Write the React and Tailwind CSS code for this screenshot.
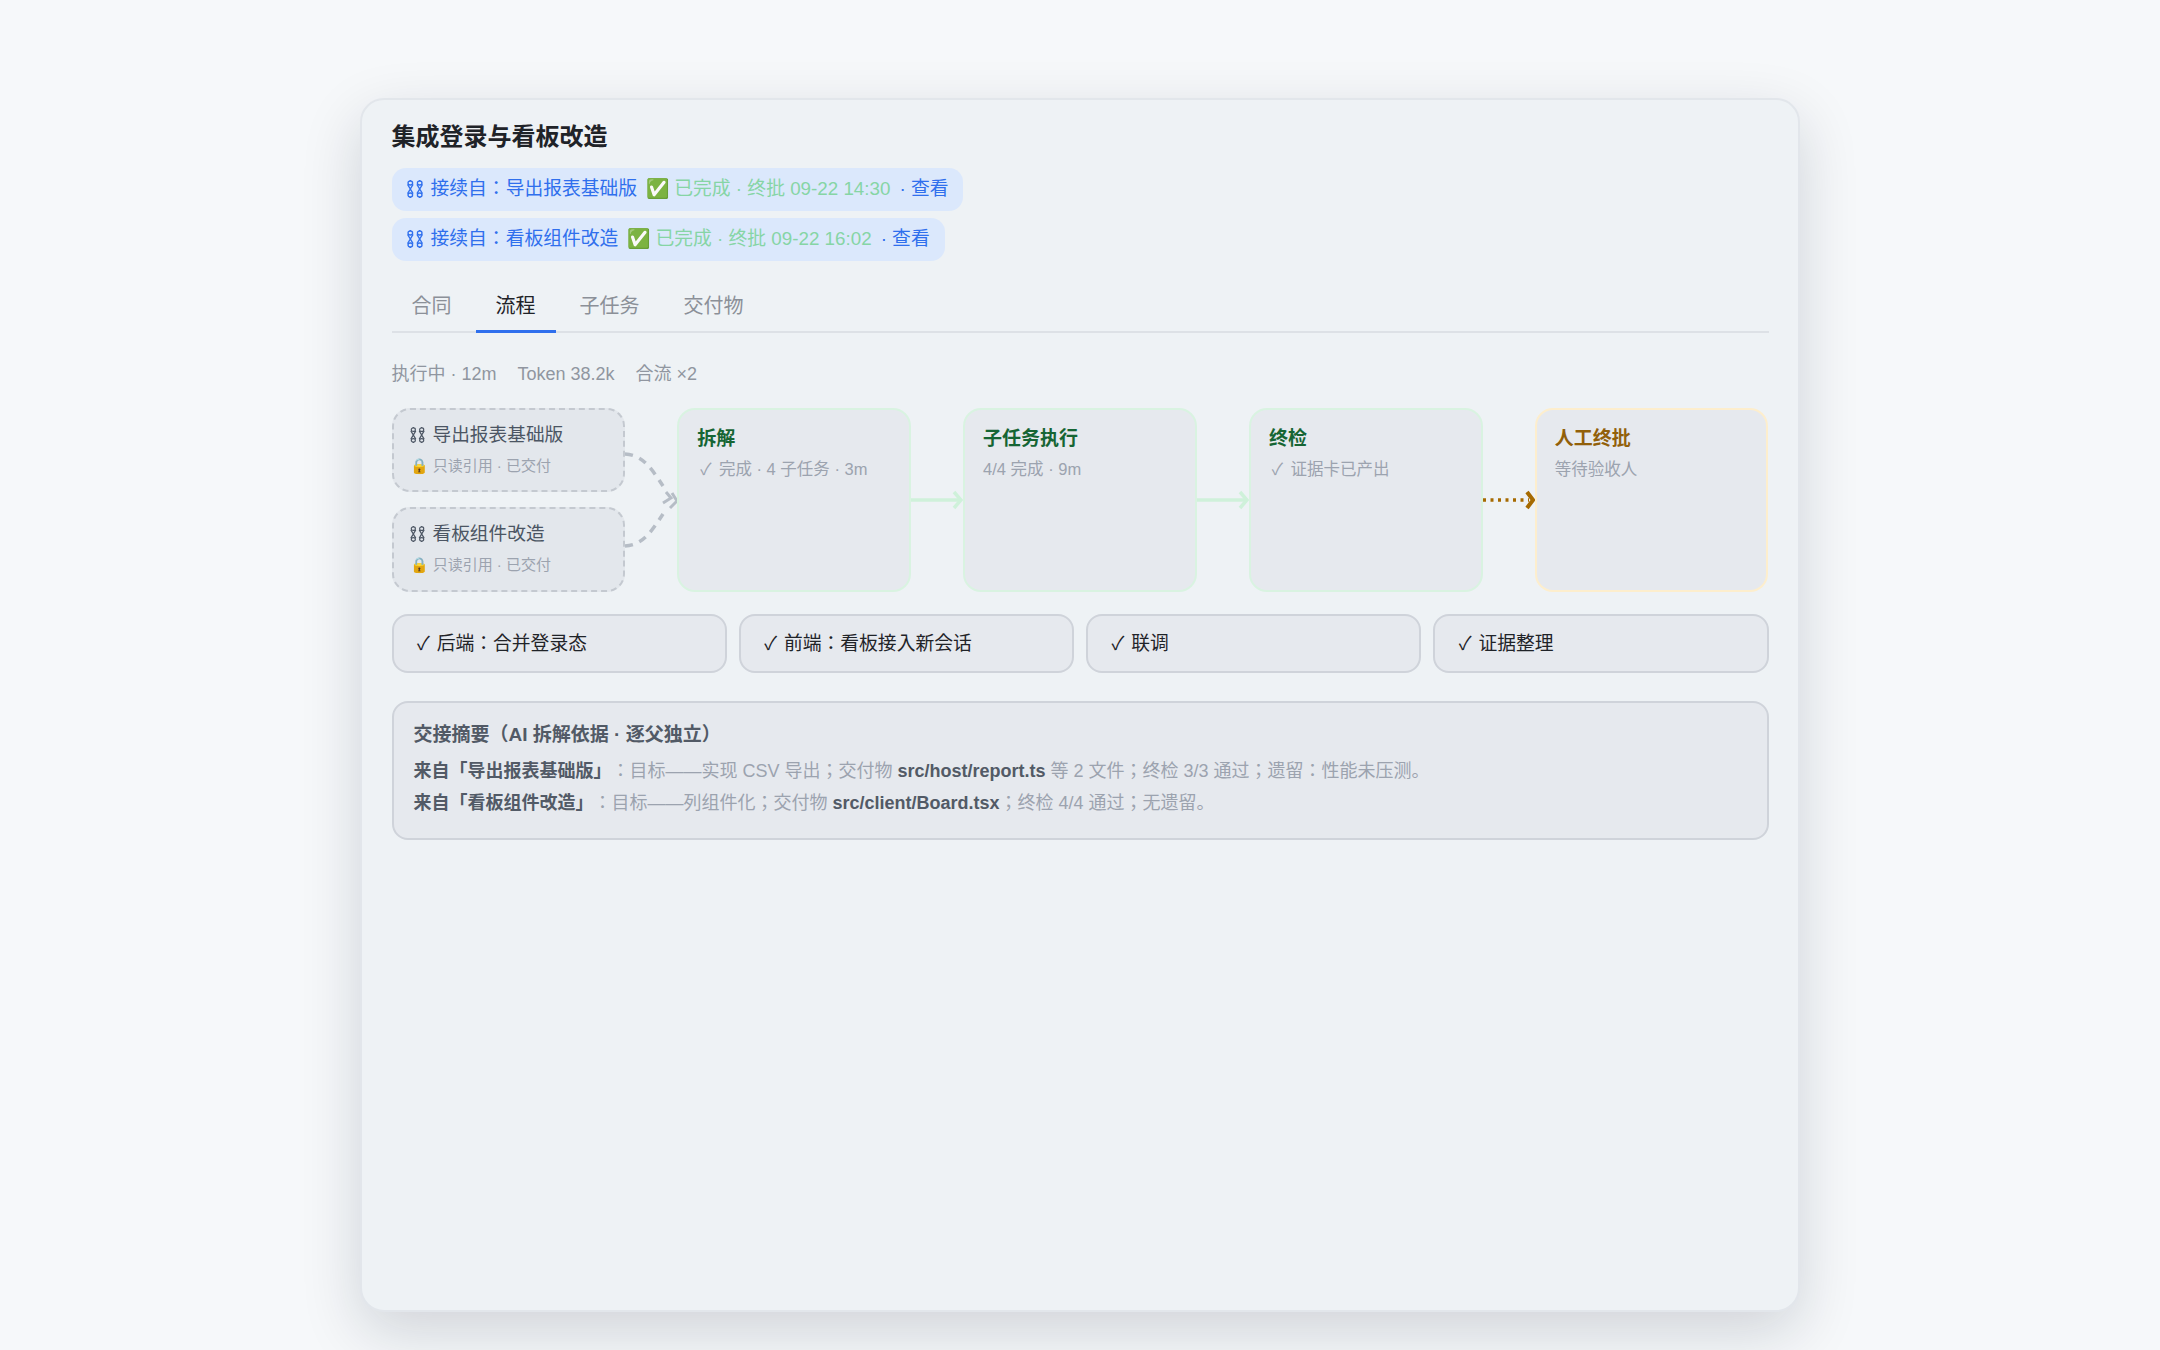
import React from 'react';

const chips = [
  { name: '导出报表基础版', when: '09-22 14:30' },
  { name: '看板组件改造', when: '09-22 16:02' },
];

const tabs = ['合同', '流程', '子任务', '交付物'];

const steps = [
  { title: '拆解', sub: '完成 · 4 子任务 · 3m', checked: true, done: true },
  { title: '子任务执行', sub: '4/4 完成 · 9m', done: true },
  { title: '终检', sub: '证据卡已产出', checked: true, done: true },
  { title: '人工终批', sub: '等待验收人', done: false },
];

const tasks = ['后端：合并登录态', '前端：看板接入新会话', '联调', '证据整理'];

// two chain strands, drawn in the text colour
const ChainIcon = ({ className }) => (
  <svg viewBox="0 0 16 18" fill="none" stroke="currentColor" strokeWidth="1.3" className={className}>
    {[3.3, 12.7].map((x) => (
      <g key={x}>
        <path d={`M${x} 0 V1 M${x} 17 V18`} />
        <ellipse cx={x} cy="3" rx="2.3" ry="2" />
        <ellipse cx={x} cy="15" rx="2.3" ry="2" />
        <path d={`M${x - 2.8} 4.4 L${x + 2.8} 13.6 M${x + 2.8} 4.4 L${x - 2.8} 13.6`} />
      </g>
    ))}
  </svg>
);

const Check = ({ className }) => <span className={className}>✓</span>;

// joins the two read-only refs into the first step
const MergeArrow = () => (
  <svg width="52" height="184" viewBox="0 0 52 184" fill="none" className="shrink-0">
    <g stroke="#b6bdc6" strokeWidth="3.5">
      <path d="M0 46 C 18 47, 26 60, 38 78" strokeDasharray="8 7" />
      <path d="M0 138 C 18 137, 26 124, 38 106" strokeDasharray="8 7" />
      <path d="M41 84 L46 90 L38 95" strokeWidth="3" />
      <path d="M47 85 L52 93 L45 100" strokeWidth="3" />
    </g>
  </svg>
);

const StepArrow = ({ amber }) => (
  <svg width="52" height="184" viewBox="0 0 52 184" fill="none" className="shrink-0">
    {amber ? (
      <g stroke="#a66a00" strokeWidth="3.5">
        <path d="M0 92 H46" strokeDasharray="3 4.5" />
        <path d="M44 84 L50 92 L44 100" strokeWidth="4" />
      </g>
    ) : (
      <g stroke="#cff1da" strokeWidth="3.5">
        <path d="M0 92 H50" />
        <path d="M43 84 L50 92 L43 100" />
      </g>
    )}
  </svg>
);

const RefCard = ({ name, className }) => (
  <div className={className}>
    <div className="flex items-center gap-[8px] text-[18.7px] leading-[28px] text-[#4b5563]">
      <ChainIcon className="h-[16px] w-[15px] shrink-0" />
      {name}
    </div>
    <div className="mt-[6px] text-[15px] leading-[22px] text-[#9ca3af]">🔒 只读引用 · 已交付</div>
  </div>
);

export default function App() {
  return (
    <div className="min-h-screen bg-[#f6f8fa] pt-[98px] font-['Liberation_Sans','Noto_Sans_CJK_JP',sans-serif]">
      <div className="mx-auto h-[1214px] w-[1440px] rounded-[24px] border-2 border-[#e2e6eb] bg-[#eef2f5] px-[29.5px] pt-[21px] shadow-[0_20px_60px_rgba(15,23,42,0.16)]">
        <h1 className="text-[24px] font-bold leading-[32px] text-[#1f2328]">集成登录与看板改造</h1>

        <div className="mt-[15px] flex flex-col items-start gap-[7px]">
          {chips.map((c) => (
            <div key={c.name} className="flex h-[43px] items-center rounded-[14px] bg-[#dbe8fc] px-[15px] text-[18.8px] text-[#2f6fed]">
              <ChainIcon className="-mt-[2px] mr-[8px] h-[18px] w-[16px] shrink-0" />
              <span>接续自：{c.name}</span>
              <span className="ml-[9px] text-[#86d5a5]">✅ 已完成 · 终批 {c.when}</span>
              <span className="ml-[9px]">· 查看</span>
            </div>
          ))}
        </div>

        <div className="mt-[21px] flex gap-[4px] border-b-2 border-[#dde1e6]">
          {tabs.map((t) => (
            <div
              key={t}
              className={
                t === '流程'
                  ? '-mb-[2px] border-b-[3px] border-[#2f6fed] px-[20px] pb-[9px] pt-[9px] text-[20px] leading-[30px] text-[#1f2328]'
                  : '-mb-[2px] border-b-[3px] border-transparent px-[20px] pb-[9px] pt-[9px] text-[20px] leading-[30px] text-[#8b9098]'
              }
            >
              {t}
            </div>
          ))}
        </div>

        <div className="mt-[28px] flex gap-[21px] text-[18px] leading-[26px] text-[#9096a0]">
          <span>执行中 · 12m</span>
          <span>Token 38.2k</span>
          <span>合流 ×2</span>
        </div>

        <div className="mt-[21px] flex h-[184px]">
          <div className="flex w-[233.8px] shrink-0 flex-col gap-[15px]">
            <RefCard name="导出报表基础版" className="h-[84px] rounded-[18px] border-2 border-dashed border-[#c4c9d0] bg-[#e3e7ec] px-[16px] pt-[11px]" />
            <RefCard name="看板组件改造" className="flex-1 rounded-[18px] border-2 border-dashed border-[#c4c9d0] bg-[#e3e7ec] px-[16px] pt-[11px]" />
          </div>
          <MergeArrow />
          {steps.map((s, i) => (
            <React.Fragment key={s.title}>
              {i > 0 && <StepArrow amber={!s.done} />}
              <div
                className={
                  s.done
                    ? 'w-[233.8px] shrink-0 rounded-[18px] border-2 border-[#d9f3e1] bg-[#e6e9ee] px-[18px] pt-[15px]'
                    : 'w-[233.8px] shrink-0 rounded-[18px] border-2 border-[#fdeecd] bg-[#e6e9ee] px-[18px] pt-[15px]'
                }
              >
                <div className={s.done ? 'text-[19px] font-bold leading-[28px] text-[#166534]' : 'text-[19px] font-bold leading-[28px] text-[#92600a]'}>
                  {s.title}
                </div>
                <div className="mt-[4px] text-[16.5px] leading-[24px] text-[#9ca3af]">
                  {s.checked && <Check className="inline-block w-[17px] text-center" />} {s.sub}
                </div>
              </div>
            </React.Fragment>
          ))}
        </div>

        <div className="mt-[22px] grid grid-cols-4 gap-[12px]">
          {tasks.map((t) => (
            <div key={t} className="flex h-[59px] items-center rounded-[16px] border-2 border-[#cfd3da] bg-[#e6e9ee] px-[22px] pt-[1px] text-[18.8px] text-[#1f2328]">
              <span>
                <Check className="inline-block w-[16px] text-center" /> {t}
              </span>
            </div>
          ))}
        </div>

        <div className="mt-[28px] h-[139px] rounded-[16px] border-2 border-[#cfd3da] bg-[#e6e9ee] px-[20px] pt-[18px]">
          <div className="text-[19px] font-bold leading-[28px] text-[#525a66]">交接摘要（AI 拆解依据 · 逐父独立）</div>
          <div className="mt-[6px] text-[18px] leading-[32px] text-[#9ca3af] [text-spacing-trim:space-all]">
            <div>
              <b className="text-[#525a66]">来自「导出报表基础版」</b>：目标——实现 CSV 导出；交付物 <b className="text-[#525a66]">src/host/report.ts</b> 等 2 文件；终检 3/3 通过；遗留：性能未压测。
            </div>
            <div>
              <b className="text-[#525a66]">来自「看板组件改造」</b>：目标——列组件化；交付物 <b className="text-[#525a66]">src/client/Board.tsx</b>；终检 4/4 通过；无遗留。
            </div>
          </div>
        </div>
      </div>
    </div>
  );
}
